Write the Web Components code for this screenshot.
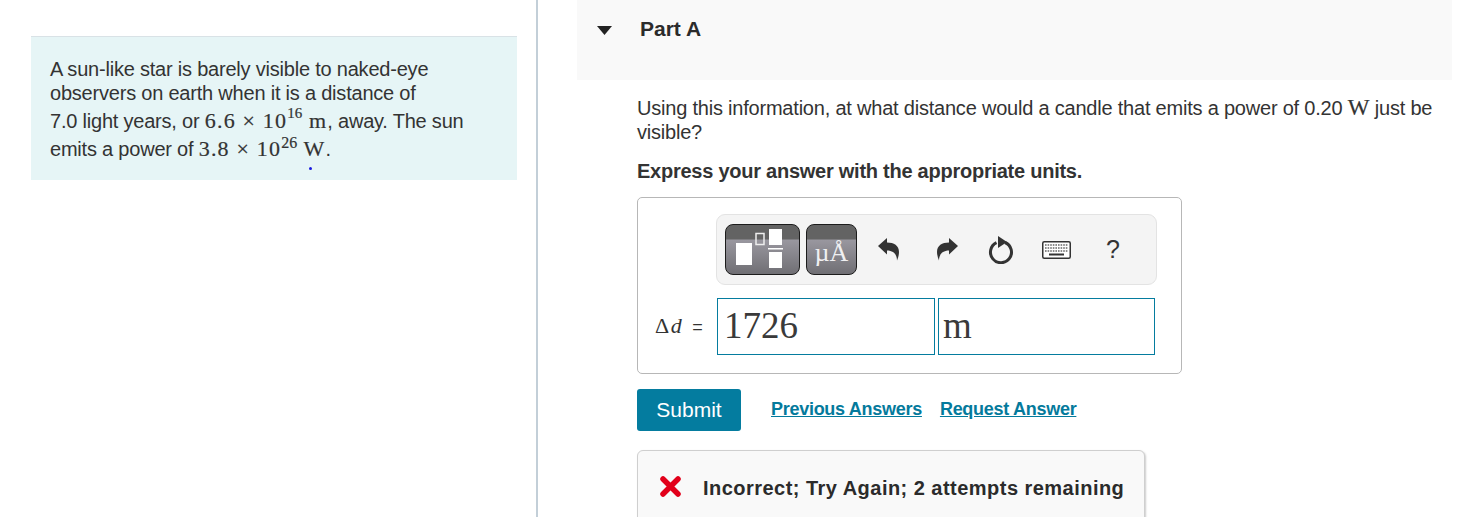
<!DOCTYPE html>
<html lang="en">
<head>
<meta charset="utf-8">
<title>Part A</title>
<style>
  html, body { margin: 0; padding: 0; background: #fff; }
  body { font-family: "Liberation Sans", Arial, sans-serif; color: #333; height: 517px; overflow: hidden; }
</style>
</head>
<body>
<quiz-page>
  <quiz-stimulus slot="left">
    A sun-like star is barely visible to naked-eye<br>
    observers on earth when it is a distance of<br>
    7.0 light years, or <quiz-math>6.6 &times; 10<sup>16</sup> m</quiz-math>, away. The sun<br>
    emits a power of <quiz-math>3.8 &times; 10<sup class="low">26</sup> W</quiz-math>.
  </quiz-stimulus>
  <quiz-part slot="right" title="Part A">
    <p>Using this information, at what distance would a candle that emits a power of 0.20 <quiz-math plain>W</quiz-math> just be<br>visible?</p>
    <p class="strong">Express your answer with the appropriate units.</p>
    <quiz-answer value="1726" unit="m"></quiz-answer>
    <quiz-actions></quiz-actions>
    <quiz-feedback>Incorrect; Try Again; 2 attempts remaining</quiz-feedback>
  </quiz-part>
</quiz-page>

<script>
class QuizPage extends HTMLElement {
  constructor() {
    super();
    this.attachShadow({ mode: "open" });
    this.shadowRoot.innerHTML = `
      <style>
        :host { display: grid; grid-template-columns: 538px 1fr; height: 517px; }
        .left { border-right: 2px solid #c3cfd8; box-sizing: border-box; padding: 36px 19px 0 31px; }
        .right { padding: 0 32px 0 39px; }
      </style>
      <div class="left"><slot name="left"></slot></div>
      <div class="right"><slot name="right"></slot></div>
    `;
  }
}

class QuizStimulus extends HTMLElement {
  constructor() {
    super();
    this.attachShadow({ mode: "open" });
    this.shadowRoot.innerHTML = `
      <style>
        :host {
          display: block;
          position: relative;
          box-sizing: border-box;
          height: 144px;
          padding: 20px 10px 0 19px;
          background: #e6f5f6;
          border-top: 1px solid #d9e2e6;
          font-size: 20px;
          line-height: 24px;
          letter-spacing: -0.21px;
          color: #333;
          white-space: nowrap;
        }
        .dot {
          position: absolute;
          left: 278px;
          top: 130px;
          width: 3px;
          height: 3px;
          border-radius: 50%;
          background: #1a1ae0;
        }
      </style>
      <slot></slot>
      <span class="dot"></span>
    `;
  }
}

class QuizMath extends HTMLElement {
  constructor() {
    super();
    this.attachShadow({ mode: "open" });
    this.shadowRoot.innerHTML = `
      <style>
        :host {
          display: inline-block;
          padding-top: 4px;
          font-family: "Liberation Serif", "Times New Roman", serif;
          font-size: 22px;
          letter-spacing: 1.2px;
          line-height: 24px;
          -webkit-text-stroke: 0.2px currentColor;
        }
        :host([plain]) { padding-top: 0; letter-spacing: 0; font-size: 23px; }
        ::slotted(sup) { font-size: 15px; letter-spacing: 0; line-height: 0; vertical-align: 10px; }
        ::slotted(sup.low) { vertical-align: 8px; font-size: 16px; }
      </style>
      <slot></slot>
    `;
  }
}

class QuizPart extends HTMLElement {
  constructor() {
    super();
    this.attachShadow({ mode: "open" });
    this.shadowRoot.innerHTML = `
      <style>
        :host { display: block; font-size: 20px; line-height: 24px; letter-spacing: -0.21px; color: #333; }
        header {
          display: flex;
          gap: 28px;
          height: 80px;
          box-sizing: border-box;
          padding: 17px 0 0 20px;
          background: #f9f9f9;
          font-weight: 700;
          font-size: 21px;
          letter-spacing: 0;
          color: #2b2b2b;
        }
        svg { margin-top: 9px; }
        .body { padding: 16px 0 0 60px; }
        ::slotted(p) { margin: 0 0 15px; }
        ::slotted(p.strong) { font-weight: 700; letter-spacing: -0.25px; margin-bottom: 14px; }
      </style>
      <header>
        <svg width="15" height="9" viewBox="0 0 15 9"><path d="M0 0H15L7.5 9Z" fill="#222"/></svg>
        <span class="title"></span>
      </header>
      <div class="body"><slot></slot></div>
    `;
    this.shadowRoot.querySelector(".title").textContent = this.getAttribute("title");
  }
}

class QuizToolbar extends HTMLElement {
  constructor() {
    super();
    this.attachShadow({ mode: "open" });
    this.shadowRoot.innerHTML = `
      <style>
        :host {
          display: flex;
          align-items: center;
          box-sizing: border-box;
          width: 441px;
          height: 71px;
          padding: 0 0 0 8px;
          background: #f4f4f4;
          border: 1px solid #e3e3e3;
          border-radius: 9px;
          letter-spacing: 0;
        }
        .btn {
          position: relative;
          box-sizing: border-box;
          height: 51px;
          border: 1px solid #1c1c1c;
          border-radius: 8px;
          background: linear-gradient(#636363 0, #636363 14px, #99979f 15px, #706f74 100%);
          overflow: hidden;
        }
        .tpl { width: 75px; }
        .sym {
          width: 51px;
          margin-left: 6px;
          display: flex;
          justify-content: center;
          font-family: "Liberation Serif", serif;
          font-size: 26px;
          line-height: 56px;
          color: #f0f0f2;
        }
        .btn svg { display: block; }
        .ic { flex: none; display: block; }
        .undo { margin-left: 21px; }
        .redo { margin-left: 38px; }
        .again { margin-left: 30px; }
        .keys { margin-left: 28px; }
        .help { margin-left: 35px; font-size: 25px; margin-top: -2px; color: #333; }
      </style>
      <div class="btn tpl">
        <svg width="73" height="49" viewBox="1 1 73 49">
          <path d="M11 19H27V41H11ZM44 5H57V21H44ZM43 24H58V25.5H43ZM44 28H57V44H44Z" fill="#fff"/>
          <rect x="31" y="9.5" width="8" height="11" fill="none" stroke="#eee" stroke-width="1.5"/>
        </svg>
      </div>
      <div class="btn sym">µÅ</div>
      <svg class="ic undo" width="21" height="23" viewBox="0 0 21 23"><path d="M0 8L9 0V4.5C16 4.5 21 7.5 21 14C21 17 20 20 19 22.5C19 17 16 12.5 9 12.5V16.5Z" fill="#333"/></svg>
      <svg class="ic redo" width="21" height="23" viewBox="0 0 21 23"><path d="M21 8L12 0V4.5C5 4.5 0 7.5 0 14C0 17 1 20 2 22.5C2 17 5 12.5 12 12.5V16.5Z" fill="#333"/></svg>
      <svg class="ic again" width="26" height="28" viewBox="0 0 26 28"><path d="M8.5 6.7A10.5 10.5 0 1 0 17 6.5" fill="none" stroke="#333" stroke-width="3"/><path d="M10 0L19 6L10 12Z" fill="#333"/></svg>
      <svg class="ic keys" width="29" height="18" viewBox="0 0 29 18">
        <rect x="0.75" y="0.75" width="27.5" height="16.5" rx="1.5" fill="#fff" stroke="#333" stroke-width="1.5"/>
        <path d="M3 4H26M3 7H26M3 10H26" stroke="#666" stroke-width="1.4" stroke-dasharray="1.6 1"/>
        <path d="M7 13.5H22" stroke="#333" stroke-width="2"/>
      </svg>
      <span class="help">?</span>
    `;
  }
}

class QuizAnswer extends HTMLElement {
  constructor() {
    super();
    this.attachShadow({ mode: "open" });
    this.shadowRoot.innerHTML = `
      <style>
        :host {
          display: block;
          box-sizing: border-box;
          width: 545px;
          height: 177px;
          padding: 16px 0 0 78px;
          border: 1px solid #b7b7b7;
          border-radius: 5px;
          letter-spacing: 0;
        }
        .row { display: flex; align-items: center; gap: 3px; margin: 13px 0 0 -61px; }
        .label {
          width: 59px;
          display: flex;
          align-items: baseline;
          font-size: 18px;
        }
        .label span { font-family: "Liberation Serif", serif; font-size: 22px; letter-spacing: 1.5px; margin-right: 9px; }
        .field {
          box-sizing: border-box;
          width: 218px;
          height: 57px;
          padding: 0 6px;
          border: 1px solid #047c9f;
          font-family: "Liberation Serif", serif;
          font-size: 37px;
          line-height: 53px;
          color: #3a3a3a;
        }
        .field.unit { width: 217px; padding-left: 4px; }
      </style>
      <quiz-toolbar></quiz-toolbar>
      <div class="row">
        <div class="label"><span>&Delta;<i>d</i></span>=</div>
        <div class="field value"></div>
        <div class="field unit"></div>
      </div>
    `;
    this.shadowRoot.querySelector(".value").textContent = this.getAttribute("value");
    this.shadowRoot.querySelector(".unit").textContent = this.getAttribute("unit");
  }
}

class QuizActions extends HTMLElement {
  constructor() {
    super();
    this.attachShadow({ mode: "open" });
    this.shadowRoot.innerHTML = `
      <style>
        :host { display: flex; align-items: center; margin-top: 15px; height: 42px; }
        button {
          width: 104px;
          height: 42px;
          border: 0;
          border-radius: 3px;
          background: #047c9f;
          color: #fff;
          font: 21px "Liberation Sans", sans-serif;
          padding: 0;
        }
        a {
          font-size: 18px;
          font-weight: 700;
          letter-spacing: -0.28px;
          color: #047a9c;
          text-decoration: underline;
          margin-bottom: 3px;
        }
        .prev { margin-left: 30px; }
        .req { margin-left: 18px; }
      </style>
      <button type="button">Submit</button>
      <a class="prev" href="#">Previous Answers</a>
      <a class="req" href="#">Request Answer</a>
    `;
  }
}

class QuizFeedback extends HTMLElement {
  constructor() {
    super();
    this.attachShadow({ mode: "open" });
    this.shadowRoot.innerHTML = `
      <style>
        :host {
          display: flex;
          align-items: center;
          gap: 22px;
          box-sizing: border-box;
          width: 508px;
          height: 80px;
          margin-top: 19px;
          padding: 0 0 5px 22px;
          background: #f9f9f9;
          border: 1px solid #cfcfcf;
          border-radius: 6px;
          box-shadow: 1px 1px 2px rgba(0, 0, 0, 0.2);
          font-weight: 700;
          font-size: 20px;
          letter-spacing: 0.47px;
          color: #2b2b2b;
          white-space: nowrap;
        }
        svg { flex: none; margin-bottom: 2px; }
      </style>
      <svg width="21" height="21" viewBox="0 0 21 21"><path d="M3 3L18 18M18 3L3 18" stroke="#e2001a" stroke-width="5.5" stroke-linecap="round"/></svg>
      <span><slot></slot></span>
    `;
  }
}

customElements.define("quiz-page", QuizPage);
customElements.define("quiz-stimulus", QuizStimulus);
customElements.define("quiz-math", QuizMath);
customElements.define("quiz-part", QuizPart);
customElements.define("quiz-toolbar", QuizToolbar);
customElements.define("quiz-answer", QuizAnswer);
customElements.define("quiz-actions", QuizActions);
customElements.define("quiz-feedback", QuizFeedback);
</script>
</body>
</html>
